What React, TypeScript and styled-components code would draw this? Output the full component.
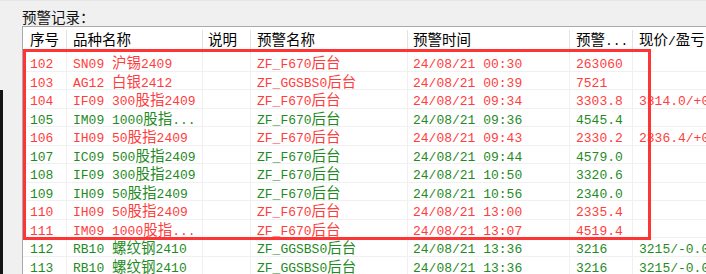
import React, {ReactNode} from 'react';
import styled, {createGlobalStyle} from 'styled-components';

const Global = createGlobalStyle`
html,body{margin:0;padding:0;background:#f0f0f0;overflow:hidden;}
body{width:706px;height:274px;}
`;

const Page = styled.div`
position:relative;display:flex;width:706px;height:274px;overflow:hidden;
border-top:1px solid #e6e6e6;box-sizing:border-box;
`;
const Edge = styled.div`
flex:0 0 3px;background:linear-gradient(#f0f0f0 0 89px, #141414 89px);
`;
const Main = styled.div`
flex:1;padding-left:19px;display:flex;flex-direction:column;
`;
const Title = styled.div`
margin-top:5px;height:20px;line-height:20px;
font:14.5px "Noto Sans CJK SC", sans-serif;color:#111;
`;
const Table = styled.div`
width:760px;background:#fff;border:1px solid #a9a9a9;border-right:none;border-bottom:none;
flex:1;
`;
const cols = '44px 136px 48px 157px 162px 63px 1fr';
const HeadRow = styled.div`
display:grid;grid-template-columns:${cols};height:26px;
`;
const HeadCell = styled.div<{ $pad: number }>`
position:relative;box-sizing:border-box;
padding:6px 0 0 ${p => p.$pad}px;height:26px;white-space:pre;
font:13px/18px "Liberation Mono", "Noto Sans CJK SC", monospace;color:#000;
&::after{content:'';position:absolute;right:0;top:3px;bottom:0;width:1px;background:#e3e3e3;}
`;
const Row = styled.div`
display:grid;grid-template-columns:${cols};height:18.55px;box-sizing:border-box;
border-bottom:1px solid #f0f0f0;
`;
const Cell = styled.div<{ $pad: number; $color: string }>`
box-sizing:border-box;padding:3px 0 0 ${p => p.$pad}px;height:17.55px;white-space:pre;
border-right:1px solid #f0f0f0;
font:13px/18px "Liberation Mono", "Noto Sans CJK SC", monospace;color:${p => p.$color};
`;
const Han = styled.span`
font-family:"Noto Sans CJK SC", sans-serif;font-size:14.5px;line-height:12px;
`;
const Mark = styled.div`
position:absolute;left:23px;top:48px;width:628px;height:191px;
border:3px solid #ff3434;box-sizing:border-box;pointer-events:none;
`;

const RED = '#ff3d3d';
const GREEN = '#1f8b1f';
const pads = [7, 6, 5, 6, 5, 6, 6];

function mix(text: string): ReactNode[] {
  return text.split(/([\u4e00-\u9fff\uff00-\uffef]+)/).filter(s => s).map((s, i) =>
    /[\u4e00-\u9fff\uff00-\uffef]/.test(s) ? <Han key={i}>{s}</Han> : <span key={i}>{s}</span>
  );
}

const head = ['序号', '品种名称', '说明', '预警名称', '预警时间', '预警...', '现价/盈亏'];

const rows: [string, string, string, string, string, string, 'r' | 'g'][] = [
  ['102', 'SN09 沪锡2409', 'ZF_F670后台', '24/08/21 00:30', '263060', '', 'r'],
  ['103', 'AG12 白银2412', 'ZF_GGSBS0后台', '24/08/21 00:39', '7521', '', 'r'],
  ['104', 'IF09 300股指2409', 'ZF_F670后台', '24/08/21 09:34', '3303.8', '3314.0/+0.31%', 'r'],
  ['105', 'IM09 1000股指...', 'ZF_F670后台', '24/08/21 09:36', '4545.4', '', 'g'],
  ['106', 'IH09 50股指2409', 'ZF_F670后台', '24/08/21 09:43', '2330.2', '2336.4/+0.27%', 'r'],
  ['107', 'IC09 500股指2409', 'ZF_F670后台', '24/08/21 09:44', '4579.0', '', 'g'],
  ['108', 'IF09 300股指2409', 'ZF_F670后台', '24/08/21 10:50', '3320.6', '', 'g'],
  ['109', 'IH09 50股指2409', 'ZF_F670后台', '24/08/21 10:56', '2340.0', '', 'g'],
  ['110', 'IH09 50股指2409', 'ZF_F670后台', '24/08/21 13:00', '2335.4', '', 'r'],
  ['111', 'IM09 1000股指...', 'ZF_F670后台', '24/08/21 13:07', '4519.4', '', 'r'],
  ['112', 'RB10 螺纹钢2410', 'ZF_GGSBS0后台', '24/08/21 13:36', '3216', '3215/-0.03%', 'g'],
  ['113', 'RB10 螺纹钢2410', 'ZF_GGSBS0后台', '24/08/21 13:36', '3216', '3215/-0.03%', 'g'],
];

export default function App() {
  return (
    <Page>
      <Global/>
      <Edge/>
      <Main>
        <Title>预警记录：</Title>
        <Table>
          <HeadRow>
            {head.map((h, i) => <HeadCell key={h} $pad={pads[i]}>{mix(h)}</HeadCell>)}
          </HeadRow>
          {rows.map(r => {
            const color = r[6] === 'r' ? RED : GREEN;
            const values = [r[0], r[1], '', r[2], r[3], r[4], r[5]];
            return <Row key={r[0]}>
              {values.map((v, i) => <Cell key={i} $pad={pads[i]} $color={color}>{mix(v)}</Cell>)}
            </Row>;
          })}
        </Table>
      </Main>
      <Mark/>
    </Page>
  );
}
